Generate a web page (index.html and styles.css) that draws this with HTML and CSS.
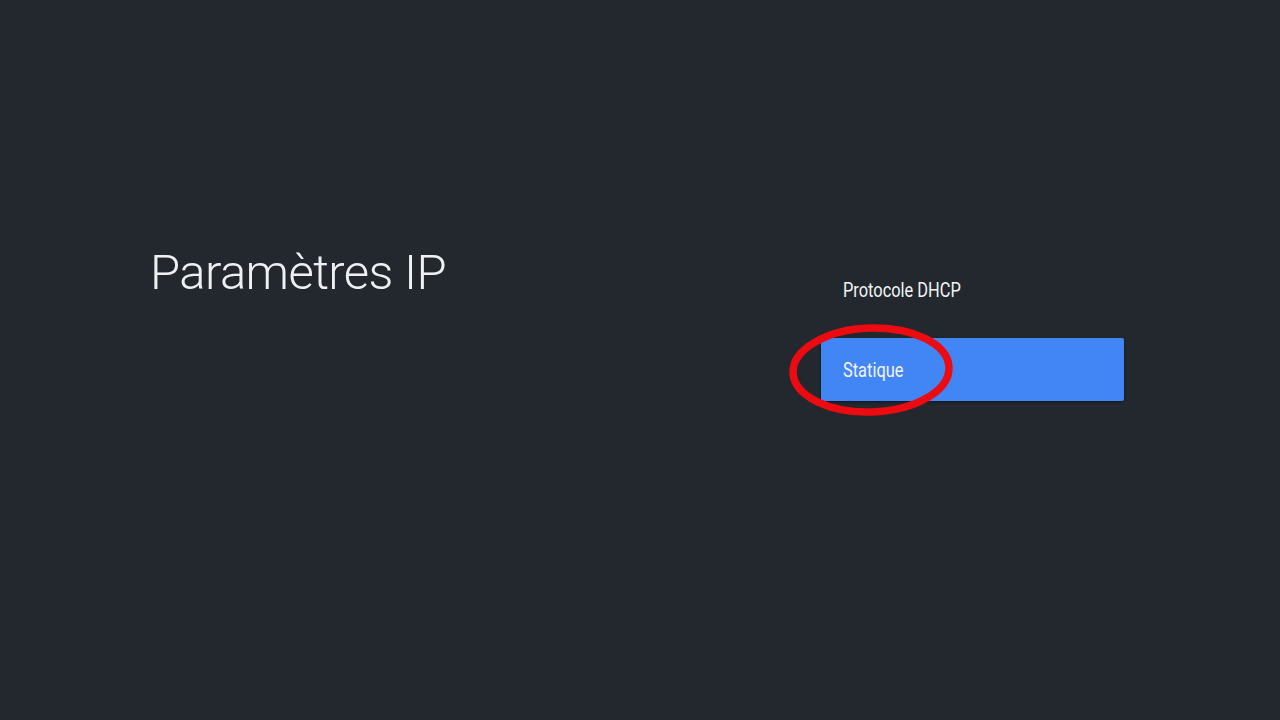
FILE: index.html
```html
<!DOCTYPE html>
<html lang="fr">
<head>
<meta charset="utf-8">
<title>Paramètres IP</title>
<link rel="stylesheet" href="styles.css">
</head>
<body>
<main class="screen">
  <section class="title-col">
    <h1 class="title">Paramètres IP</h1>
  </section>
  <section class="options">
    <div class="option"><span class="label">Protocole DHCP</span></div>
    <div class="option option-selected"><span class="label">Statique</span>
      <svg class="circle" width="170" height="96" viewBox="0 0 170 96" aria-hidden="true">
        <ellipse cx="85" cy="48" rx="78" ry="42" fill="none" stroke="#ec0b10" stroke-width="7.5" transform="rotate(-2 85 48)"/>
      </svg>
    </div>
  </section>
</main>
</body>
</html>
```

FILE: styles.css
```css
html, body {
  margin: 0;
  padding: 0;
}
body {
  background: #22282e;
  width: 1280px;
  height: 720px;
  overflow: hidden;
  font-family: Roboto, "Noto Sans", "Liberation Sans", sans-serif;
  color: #f1f2f3;
}
.screen {
  display: flex;
  height: 720px;
}
.title-col {
  flex: 0 0 821px;
  padding: 243px 0 0 150px;
  box-sizing: border-box;
}
.title {
  margin: 0;
  font-size: 49px;
  line-height: 60px;
  font-weight: 300;
  letter-spacing: -0.6px;
  color: #eef0f1;
}
.options {
  flex: 0 0 303px;
  padding-top: 258px;
  display: flex;
  flex-direction: column;
  gap: 17px;
}
.option {
  position: relative;
  height: 63px;
  display: flex;
  align-items: center;
  padding-left: 22px;
  font-size: 20px;
  color: #f3f4f5;
}
.label {
  display: inline-block;
  transform: scaleX(0.82);
  transform-origin: left center;
  white-space: nowrap;
}
.option-selected {
  background: #4285f4;
  border-radius: 2px;
  box-shadow: 0 1px 3px rgba(0, 0, 0, 0.45);
}
.circle {
  position: absolute;
  left: -35px;
  top: -16px;
}
```
